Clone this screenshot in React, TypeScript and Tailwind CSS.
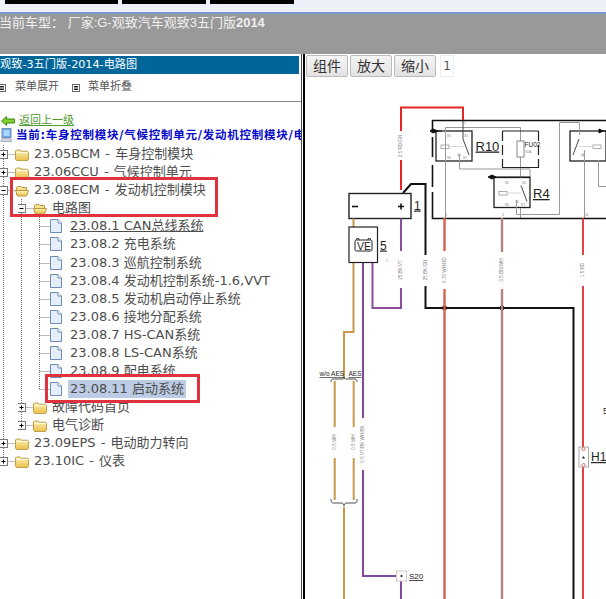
import React from "react";

const F = "font-['DejaVu_Sans','Noto_Sans_CJK_SC',sans-serif]";

function Guide({ on = true }: { on?: boolean }) {
  return (
    <svg width="18" height="18" className="block shrink-0">
      {on && <line x1="3.5" y1="0" x2="3.5" y2="18" stroke="#777" strokeDasharray="1 1" />}
    </svg>
  );
}

function Joint({ kind, last }: { kind: "plus" | "minus" | "leaf"; last?: boolean }) {
  const w = kind === "leaf" ? 14 : 15;
  return (
    <svg width={w} height="18" className="block shrink-0">
      <line x1="3.5" y1="0" x2="3.5" y2={last ? 9 : 18} stroke="#777" strokeDasharray="1 1" />
      <line x1="3.5" y1="9.5" x2={w} y2="9.5" stroke="#777" strokeDasharray="1 1" />
      {kind !== "leaf" && (
        <>
          <rect x="-0.5" y="5.5" width="8" height="8" fill="#fff" stroke="#777" />
          <line x1="1.5" y1="9.5" x2="5.5" y2="9.5" stroke="#000" />
          {kind === "plus" && <line x1="3.5" y1="7.5" x2="3.5" y2="11.5" stroke="#000" />}
        </>
      )}
    </svg>
  );
}

function Folder({ open }: { open?: boolean }) {
  return (
    <svg width="14" height="13" viewBox="0 0 14 13" className="block shrink-0">
      <defs>
        <linearGradient id="fg" x1="0" y1="0" x2="0" y2="1">
          <stop offset="0" stopColor="#fff3b8" />
          <stop offset="1" stopColor="#eabf48" />
        </linearGradient>
      </defs>
      {open ? (
        <>
          <path d="M1.5 11V3.5L2.5 2.5H6L7 3.5H11.5V6" fill="#f7e08c" stroke="#b89a45" />
          <path d="M0.5 6.5H11L13.5 6.5L11.5 12H2.5Z" fill="url(#fg)" stroke="#b89a45" />
        </>
      ) : (
        <>
          <path d="M0.5 11.5V3L1.5 2H5L6 3.2H12.5L13.5 4.2V11.5L12.5 12.5H1.5Z" fill="url(#fg)" stroke="#bda050" />
          <path d="M1.5 4.5H12.5" stroke="#fffbe0" />
        </>
      )}
    </svg>
  );
}

function Doc() {
  return (
    <svg width="12" height="14" viewBox="0 0 12 14" className="block shrink-0">
      <path d="M0.5 0.5H8L11.5 4V13.5H0.5Z" fill="#e6eefa" stroke="#6f8cb5" />
      <path d="M8 0.5V4H11.5" fill="#fff" stroke="#6f8cb5" />
    </svg>
  );
}

function Branch({
  guides,
  kind,
  last,
  open,
  label,
}: {
  guides: boolean[];
  kind: "plus" | "minus";
  last?: boolean;
  open?: boolean;
  label: string;
}) {
  return (
    <div className="flex h-[18.08px] items-center">
      {guides.map((g, i) => (
        <Guide key={i} on={g} />
      ))}
      <Joint kind={kind} last={last} />
      <Folder open={open} />
      <span className="ml-[5px] whitespace-pre text-[13px] leading-[18px] text-[#4d4d4d] [word-spacing:1px]">
        {label}
      </span>
    </div>
  );
}

function Leaf({ label, last, link, sel }: { label: string; last?: boolean; link?: boolean; sel?: boolean }) {
  return (
    <div className="flex h-[18.08px] items-center">
      <Guide />
      <Guide />
      <Joint kind="leaf" last={last} />
      <Doc />
      <span
        className={
          "ml-[6px] whitespace-pre px-[2px] text-[13px] leading-[18px] text-[#4d4d4d]" +
          (link ? " underline" : "") +
          (sel ? " bg-[#bccce4]" : "")
        }
      >
        {label}
      </span>
    </div>
  );
}

function MenuIcon() {
  return (
    <svg width="8" height="8" viewBox="0 0 8 8" className="block shrink-0">
      <rect x="0.5" y="0.5" width="7" height="7" fill="#fff" stroke="#666" />
      <path d="M2 2.5H6M2 4H6M2 5.5H6" stroke="#222" />
    </svg>
  );
}

function Btn({ children, w }: { children: React.ReactNode; w: string }) {
  return (
    <button
      className={
        w +
        " h-[22px] rounded-[2px] border border-[#bbb] bg-gradient-to-b from-[#f5f5f5] to-[#e2e2e2] text-[14px] leading-none text-[#333]"
      }
    >
      {children}
    </button>
  );
}

function Wl({ x, y, t }: { x: number; y: number; t: string }) {
  return (
    <text
      x={x}
      y={y}
      fontSize="4.6"
      fill="#888"
      textAnchor="middle"
      transform={`rotate(-90 ${x} ${y})`}
      dominantBaseline="middle"
    >
      {t}
    </text>
  );
}

function Relay({ x, y, mirror }: { x: number; y: number; mirror?: boolean }) {
  const tx = mirror ? `translate(${x + 36} ${y}) scale(-1 1)` : `translate(${x} ${y})`;
  return (
    <g transform={tx}>
      <rect x="0" y="0" width="36" height="30" fill="#fff" stroke="#222" strokeWidth="1.3" />
      <rect x="5" y="14" width="8" height="3.5" fill="none" stroke="#999" strokeWidth="0.8" />
      <line x1="13" y1="15.5" x2="27" y2="15.5" stroke="#ccc" strokeWidth="0.8" />
      <line x1="27" y1="8" x2="33" y2="24" stroke="#333" strokeWidth="0.9" />
      <circle cx="23" cy="24" r="1.2" fill="#fff" stroke="#777" strokeWidth="0.6" />
      {!mirror && <text x="11" y="6" fontSize="3.5" fill="#888">85</text>}
      {!mirror && <text x="28" y="6" fontSize="3.5" fill="#888">30</text>}
      {!mirror && <text x="11" y="28" fontSize="3.5" fill="#888">86</text>}
      {!mirror && <text x="27" y="28" fontSize="3.5" fill="#888">87</text>}
    </g>
  );
}

function Diagram() {
  const sans = "'Liberation Sans', sans-serif";
  return (
    <svg width="301" height="522" viewBox="305 77 301 522" className="block" fontFamily={sans}>
      <Relay x={436} y={131} />
      <Relay x={494} y={177.5} />
      <Relay x={570} y={131} mirror />
      {/* grey internal wiring, over the relays as in the drawing */}
      <g fill="none" stroke="#999" strokeWidth="1">
        <path d="M445.5 218V127.5H520.5V178" />
        <path d="M520.5 208V218" />
        <path d="M459.5 155V169H530V177" />
        <path d="M516.5 201V214.5H559.5V122.5H579.5V135" />
        <path d="M584.5 150V218" />
        <path d="M598.5 160V186.5H606" />
      </g>
      <line x1="463" y1="120" x2="463" y2="139" stroke="#333" strokeWidth="0.9" />
      {/* fuse */}
      <path d="M502.5 131H538.5M502.5 167.5H538.5" fill="none" stroke="#222" strokeWidth="1.2" />
      <path d="M502.5 131V168M538.5 131V168" fill="none" stroke="#222" strokeWidth="1.2" strokeDasharray="10 4" />
      <rect x="517" y="141" width="7" height="16" fill="#fff" stroke="#888" />
      <text x="524.5" y="147" fontSize="6.5" fill="#222">FU02</text>
      <text x="525" y="153" fontSize="3.5" fill="#888">60A</text>
      {/* outer module */}
      <path d="M606 120.5H432.5V130M432.5 137V157M432.5 165V187M432.5 192V218.5H606" fill="none" stroke="#111" strokeWidth="1.6" />
      <path d="M430 131L433 129L438 131L433 133Z M432 131H442" fill="#111" stroke="#111" />
      <path d="M488 177L492 175L496 177L492 179Z M490 177H530" fill="#111" stroke="#111" />
      <path d="M606 131H603L599 129L599 133L603 131" fill="#111" stroke="#111" />
      {/* red top */}
      <path d="M401 190V107.5H463V120" fill="none" stroke="#e32727" strokeWidth="2" />
      <line x1="401" y1="131" x2="401" y2="160" stroke="#fff" strokeWidth="3" />
      <Wl x={401} y={146} t="2.5 RD/GN" />
      {/* black wire */}
      <path d="M403 193L411 184H425.5V308H573.5V599" fill="none" stroke="#111" strokeWidth="2" />
      <line x1="425.5" y1="255" x2="425.5" y2="286" stroke="#fff" strokeWidth="3" />
      <Wl x={425.5} y={270} t="25 BK/GN" />
      <circle cx="444.5" cy="308" r="2.4" fill="#111" />
      <circle cx="502" cy="308" r="2.4" fill="#111" />
      {/* vertical module outputs */}
      <line x1="444.5" y1="218" x2="444.5" y2="599" stroke="#d9604f" strokeWidth="2.4" />
      <line x1="444.5" y1="251" x2="444.5" y2="289" stroke="#fff" strokeWidth="3.4" />
      <Wl x={444.5} y={270} t="0.75 WH/RD" />
      <line x1="502" y1="218" x2="502" y2="599" stroke="#b5837f" strokeWidth="2.4" />
      <line x1="502" y1="252" x2="502" y2="289" stroke="#fff" strokeWidth="3.4" />
      <Wl x={502} y={270} t="0.5 BN/WH" />
      <line x1="583" y1="218" x2="583" y2="599" stroke="#e22d2d" strokeWidth="1.8" />
      <line x1="583" y1="255" x2="583" y2="286" stroke="#fff" strokeWidth="3" />
      <Wl x={583} y={270} t="1.5 RD" />
      {/* battery */}
      <rect x="349" y="193.5" width="62" height="25" fill="#fff" stroke="#222" strokeWidth="1.4" />
      <line x1="352" y1="206.5" x2="358" y2="206.5" stroke="#111" strokeWidth="1.6" />
      <path d="M398 206.5H404M401 203.5V209.5" stroke="#111" strokeWidth="1.6" fill="none" />
      <text x="414" y="209.5" fontSize="12" fill="#222" textDecoration="underline">1</text>
      {/* purple from battery & sensor */}
      <path d="M401 218.5V308H372.5V262" fill="none" stroke="#8a4f9b" strokeWidth="2" />
      <line x1="401" y1="251" x2="401" y2="288" stroke="#fff" strokeWidth="3" />
      <Wl x={401} y={270} t="25 BK/VT" />
      <path d="M363 262V576H397" fill="none" stroke="#7d4aa0" strokeWidth="2" />
      <line x1="363" y1="418" x2="363" y2="470" stroke="#fff" strokeWidth="3" />
      <Wl x={363} y={444} t="0.5 VT/BK WH/BK" />
      <line x1="401" y1="581" x2="401" y2="599" stroke="#7d4aa0" strokeWidth="2" />
      {/* orange */}
      <path d="M353.5 218.5V227" stroke="#c9984f" strokeWidth="2" fill="none" />
      <path d="M353.5 262V332H344V378" fill="none" stroke="#c9984f" strokeWidth="2" />
      <path d="M334.7 381V500M353.7 381V500" fill="none" stroke="#c9984f" strokeWidth="2" />
      <path d="M344 507V599" fill="none" stroke="#c9984f" strokeWidth="2" />
      <line x1="334.7" y1="427" x2="334.7" y2="458" stroke="#fff" strokeWidth="3" />
      <line x1="353.7" y1="427" x2="353.7" y2="458" stroke="#fff" strokeWidth="3" />
      <Wl x={334.7} y={442} t="0.5 WH" />
      <Wl x={353.7} y={442} t="0.5 WH" />
      {/* braces */}
      <g fill="none" stroke="#222" strokeWidth="0.8">
        <path d="M331 382C331 379 332 379 334 379H341C343 379 344 379 344 377" />
        <path d="M344 377C344 379 345 379 347 379H355C357 379 357 381 357 382" />
        <path d="M331 499C331 503 332 503 334 503H341C343 503 344 504 344 506" />
        <path d="M344 506C344 504 345 503 347 503H355C357 503 357 501 357 499" />
      </g>
      <text x="319.5" y="376" fontSize="6.5" fill="#222" textDecoration="underline">w/o AES</text>
      <text x="348.5" y="376" fontSize="6.5" fill="#222" textDecoration="underline">AES</text>
      {/* VE box */}
      <rect x="349" y="227" width="28.5" height="35.5" fill="#fff" stroke="#222" strokeWidth="1.2" />
      <rect x="355" y="240" width="17" height="11" rx="1.5" fill="#fff" stroke="#222" strokeWidth="1" />
      <path d="M356.5 240V238.6H359V240M368 240V238.6H370.5V240" stroke="#222" fill="none" strokeWidth="0.8" />
      <text x="357" y="250" fontSize="10.5" fill="#222">VE</text>
      <text x="380" y="249.5" fontSize="12" fill="#222" textDecoration="underline">5</text>
      <text x="386" y="262" fontSize="4" fill="#999">2</text>
      {/* labels */}
      <text x="475.5" y="150.5" fontSize="13" fill="#222" textDecoration="underline">R10</text>
      <text x="533" y="198" fontSize="13" fill="#222" textDecoration="underline">R4</text>
      <text x="464" y="124" fontSize="3.6" fill="#777">1</text>
      <text x="445" y="216" fontSize="3.6" fill="#777">1</text>
      <text x="502" y="216" fontSize="3.6" fill="#777">2</text>
      <text x="585" y="216" fontSize="3.6" fill="#777">11</text>
      {/* splice S20 */}
      <rect x="396.5" y="571" width="10" height="10" fill="#fff" stroke="#ccc" />
      <circle cx="401.5" cy="576" r="1" fill="#111" />
      <text x="409" y="579" fontSize="8" fill="#222" textDecoration="underline">S20</text>
      {/* connector H1 */}
      <rect x="579" y="447" width="9.5" height="20" fill="#fff" stroke="#aaa" />
      <circle cx="583.5" cy="449" r="1.6" fill="#fff" stroke="#c44" strokeWidth="0.7" />
      <circle cx="583.5" cy="465" r="1.6" fill="#fff" stroke="#c44" strokeWidth="0.7" />
      <path d="M582 458.5H585L583.5 456Z" fill="#222" />
      <text x="591" y="461" fontSize="12" fill="#222" textDecoration="underline">H1</text>
      <text x="603" y="414" fontSize="9" fill="#222">5</text>
    </svg>
  );
}

export default function App() {
  return (
    <div className={"flex h-screen w-full flex-col overflow-hidden bg-white " + F}>
      {/* top strip */}
      <div className="flex h-[12px] shrink-0 items-start gap-[4px] bg-[#eef0f9] pl-[5px]">
        <div className="h-[4px] w-[113px] bg-black" />
        <div className="h-[4px] w-[84px] bg-black" />
        <div className="h-[4px] w-[84px] bg-black" />
      </div>
      <div className="h-[2px] shrink-0 bg-[#7a95d4]" />
      {/* grey title band */}
      <div className="h-[40px] shrink-0 bg-[#999999] pt-[1px]">
        <div className="-ml-[1px] whitespace-pre font-['Liberation_Sans','Noto_Sans_CJK_SC',sans-serif] text-[13px] leading-[16px] text-[#f0f0f0]">
          <span>当前车型： </span>
          <span>厂家:G-观致汽车观致3五门版</span>
          <span className="font-bold">2014</span>
        </div>
      </div>
      {/* body */}
      <div className="flex min-h-0 flex-1">
        {/* left panel */}
        <div className="relative w-[302px] shrink-0 overflow-hidden border-r border-[#444]">
          <div className="pr-[1px] pt-[2px]">
            <div className="h-[18px] w-[299px] whitespace-pre bg-[#006699] text-[11.2px] leading-[18px] text-white">
              观致-3五门版-2014-电路图
            </div>
          </div>
          <div className="flex h-[28px] items-center border-b border-[#888] text-[11px] text-[#555]">
            <div className="-ml-[2px] flex items-center gap-[9px]">
              <MenuIcon />
              <span>菜单展开</span>
            </div>
            <div className="ml-[13px] flex items-center gap-[8px]">
              <MenuIcon />
              <span>菜单折叠</span>
            </div>
          </div>
          <div className="flex h-[25px] items-end gap-[4px] pl-[1px]">
            <svg width="14" height="10" viewBox="0 0 14 10" className="mb-[1px] block shrink-0">
              <path d="M0.5 5L5.5 0.5V3H13.5V7H5.5V9.5Z" fill="#7fd12e" stroke="#3c8a10" />
            </svg>
            <span className="text-[11px] leading-[13px] text-[#4e9a2e] underline">返回上一级</span>
          </div>
          <div className="flex h-[16px] items-center gap-[4px] whitespace-pre">
            <svg width="12" height="14" viewBox="0 0 12 14" className="block shrink-0">
              <rect x="2" y="0.5" width="9" height="9" fill="#5fa6ee" stroke="#7d8fb5" />
              <rect x="3.5" y="2" width="6" height="6" fill="#a9d8fb" />
              <path d="M1 12L3 10H10L11.5 12V13.5H1Z" fill="#cfd6e6" stroke="#8a93ad" strokeWidth="0.7" />
            </svg>
            <span className="text-[11.5px] font-bold leading-[16px] tracking-[0.75px] text-[#0808c8]">
              当前:车身控制模块/气候控制单元/发动机控制模块/电路图
            </span>
          </div>
          {/* tree */}
          <div className="relative mt-[2px]">
            <Branch guides={[]} kind="plus" label="23.05BCM - 车身控制模块" />
            <Branch guides={[]} kind="plus" label="23.06CCU - 气候控制单元" />
            <Branch guides={[]} kind="minus" open label="23.08ECM - 发动机控制模块" />
            <Branch guides={[true]} kind="minus" open label="电路图" />
            <Leaf label="23.08.1 CAN总线系统" link />
            <Leaf label="23.08.2 充电系统" />
            <Leaf label="23.08.3 巡航控制系统" />
            <Leaf label="23.08.4 发动机控制系统-1.6,VVT" />
            <Leaf label="23.08.5 发动机启动停止系统" />
            <Leaf label="23.08.6 接地分配系统" />
            <Leaf label="23.08.7 HS-CAN系统" />
            <Leaf label="23.08.8 LS-CAN系统" />
            <Leaf label="23.08.9 配电系统" />
            <Leaf label="23.08.11 启动系统" sel last />
            <Branch guides={[true]} kind="plus" label="故障代码首页" />
            <Branch guides={[true]} kind="plus" last label="电气诊断" />
            <Branch guides={[]} kind="plus" label="23.09EPS - 电动助力转向" />
            <Branch guides={[]} kind="plus" last label="23.10IC - 仪表" />
            {/* annotation boxes */}
            <div className="absolute left-[10px] top-[32px] h-[40px] w-[208px] border-[3px] border-[#e0323c]" />
            <div className="absolute left-[45px] top-[229px] h-[29px] w-[155px] border-[3px] border-[#e0323c]" />
          </div>
        </div>
        {/* right panel */}
        <div className="ml-px flex min-w-0 flex-1 flex-col border-l-2 border-black">
          <div className="flex h-[23px] items-start gap-[2px] pl-[1px] pt-[1px]">
            <Btn w="w-[42px]">组件</Btn>
            <Btn w="w-[42px]">放大</Btn>
            <Btn w="w-[42px]">缩小</Btn>
            <span className="ml-[2px] h-[22px] w-[14px] border border-[#eee] text-center text-[12px] leading-[20px] text-[#555]">1</span>
          </div>
          <Diagram />
        </div>
      </div>
    </div>
  );
}
